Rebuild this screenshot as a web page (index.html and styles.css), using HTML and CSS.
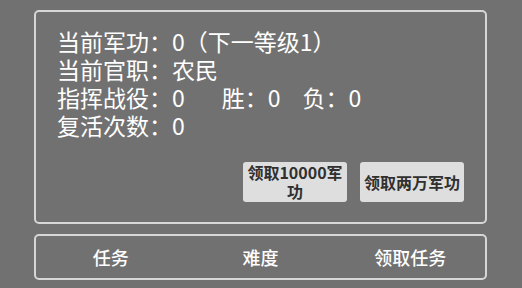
FILE: index.html
```html
<!DOCTYPE html>
<html lang="zh-CN">
<head>
<meta charset="utf-8">
<link rel="stylesheet" href="styles.css">
</head>
<body>
<div class="page">
  <section class="panel info">
    <div class="lines">
      <div class="line">当前军功：0（下一等级1）</div>
      <div class="line">当前官职：农民</div>
      <div class="line">指挥战役：0<span class="gap-lg">胜：0</span><span class="gap-sm">负：0</span></div>
      <div class="line">复活次数：0</div>
    </div>
    <div class="actions">
      <button class="btn">领取10000军功</button>
      <button class="btn">领取两万军功</button>
    </div>
  </section>
  <nav class="panel tabs">
    <div class="tab">任务</div>
    <div class="tab">难度</div>
    <div class="tab">领取任务</div>
  </nav>
</div>
</body>
</html>
```
FILE: styles.css
```css
html, body {
  margin: 0;
  padding: 0;
  background: #717171;
}
body {
  width: 522px;
  height: 288px;
  overflow: hidden;
  font-family: "Noto Sans CJK SC", "Noto Sans", sans-serif;
  color: #ffffff;
}
.page {
  padding: 10px 0 0 34px;
  display: flex;
  flex-direction: column;
  gap: 10px;
}
.panel {
  width: 453px;
  box-sizing: border-box;
  border: 2px solid #d6d6d6;
  border-radius: 5px;
}
.info {
  height: 214px;
  padding: 15px 21px 0 21px;
}
.line {
  font-size: 23px;
  line-height: 28px;
  white-space: nowrap;
}
.gap-lg {
  margin-left: 37px;
}
.gap-sm {
  margin-left: 22px;
}
.actions {
  display: flex;
  justify-content: flex-end;
  gap: 13px;
  margin-top: 23px;
}
.btn {
  width: 104px;
  height: 40px;
  padding: 0 4px;
  border: none;
  border-radius: 3px;
  background: #dedede;
  color: #303030;
  font-family: "Noto Sans CJK SC", "Noto Sans", sans-serif;
  font-size: 16px;
  font-weight: bold;
  line-height: 19px;
  text-align: center;
}
.tabs {
  height: 46px;
  display: grid;
  grid-template-columns: 1fr 1fr 1fr;
  align-items: center;
}
.tab {
  text-align: center;
  font-size: 18px;
  font-weight: 500;
  line-height: 24px;
}
```
